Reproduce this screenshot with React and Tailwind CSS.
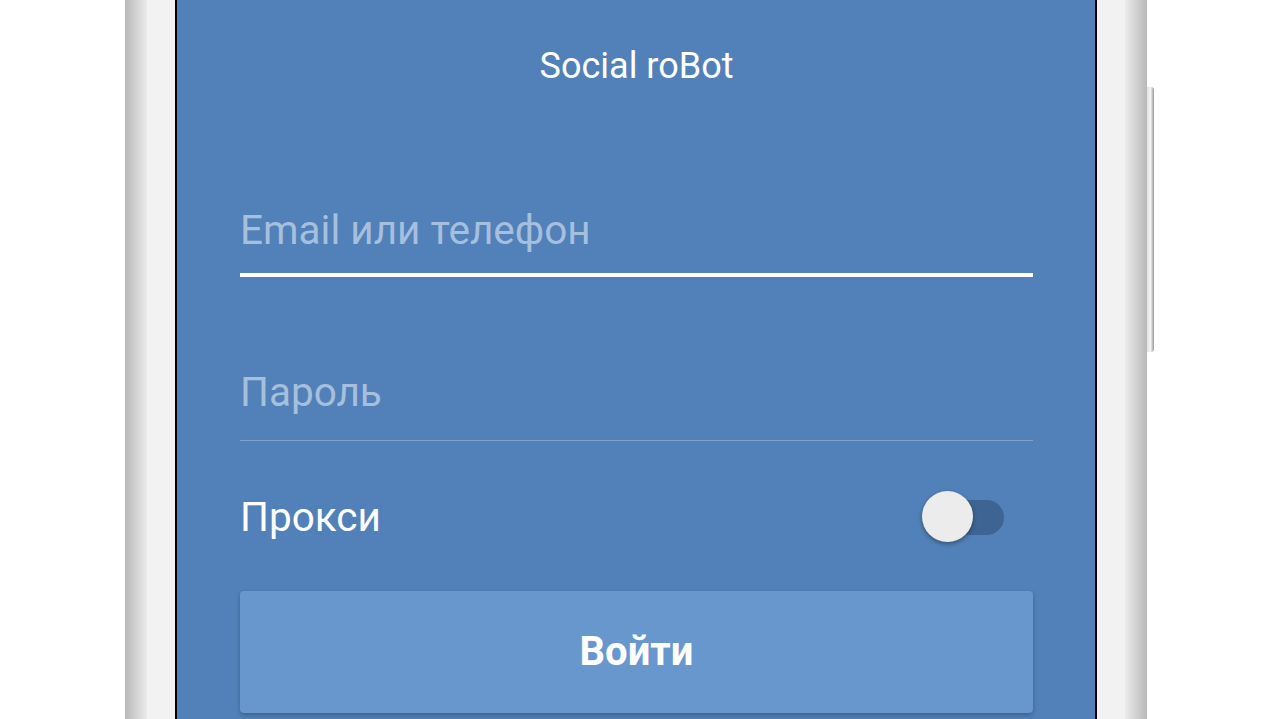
import React, { useState } from "react";

/* ------------ Toggle ------------ */
const ProxySwitch = ({ on, setOn }) => {
  return (
    <button
      type="button"
      onClick={() => setOn(!on)}
      className="relative w-[84px] h-[52px] flex items-center"
    >
      <span className="ml-[12px] w-[70px] h-[35px] rounded-full bg-[#3e6493]"></span>
      <span
        className={`absolute top-0 h-[51px] w-[51px] rounded-full bg-[#ececec] shadow-[0_2px_4px_rgba(0,0,0,0.35)] ${
          on ? "left-[33px]" : "left-0"
        }`}
      ></span>
    </button>
  );
};

const App = () => {
  const [proxy, setProxy] = useState(false);

  return (
    <div
      className="w-full h-[719px] bg-white overflow-hidden flex pl-[125px]"
      style={{ fontFamily: "Roboto, 'Noto Sans', sans-serif" }}
    >
      {/* Phone */}
      <div className="relative flex h-full">
        {/* left rim */}
        <div className="w-[22px] h-full bg-linear-to-r from-[#b8b8b8] via-[#d2d2d2] to-[#ebebeb]"></div>
        <div className="w-[28px] h-full bg-[#f2f2f2]"></div>

        {/* Screen */}
        <div className="w-[922px] h-full border-x-[2px] border-black bg-[#5181b8] pl-[63px] pr-[62px]">
          <h1 className="mt-[46px] text-center text-white text-[36px] leading-[40px]">
            Social roBot
          </h1>

          {/* Email */}
          <div className="mt-[121px]">
            <input
              type="text"
              placeholder="Email или телефон"
              className="w-full h-[46px] bg-transparent outline-none text-white text-[40.5px] leading-[46px] placeholder:text-[#a6bfdd]"
            />
            <div className="mt-[20px] h-[4px] bg-white"></div>
          </div>

          {/* Password */}
          <div className="mt-[92px]">
            <input
              type="password"
              placeholder="Пароль"
              className="w-full h-[46px] bg-transparent outline-none text-white text-[40.5px] leading-[46px] placeholder:text-[#a6bfdd]"
            />
            <div className="mt-[25px] h-px bg-[#7fa1cb]"></div>
          </div>

          {/* Proxy */}
          <div className="mt-[50px] flex items-center justify-between pr-[27px]">
            <span className="text-white text-[40.5px] leading-[46px]">Прокси</span>
            <ProxySwitch on={proxy} setOn={setProxy} />
          </div>

          {/* Submit */}
          <button
            type="button"
            className="mt-[48px] w-full h-[122px] rounded-[4px] bg-[#6797cd] text-white text-[40px] font-bold shadow-[0_2px_4px_rgba(0,0,0,0.25)]"
          >
            Войти
          </button>
        </div>

        {/* right rim */}
        <div className="w-[28px] h-full bg-[#f2f2f2]"></div>
        <div className="w-[22px] h-full bg-linear-to-r from-[#ebebeb] via-[#d2d2d2] to-[#b8b8b8]"></div>

        {/* side button */}
        <div className="absolute right-[-7px] top-[87px] w-[7px] h-[265px] rounded-r-[3px] bg-linear-to-r from-[#e2e2e2] via-[#f4f4f4] to-[#9a9a9a]"></div>
      </div>
    </div>
  );
};

export default App;
